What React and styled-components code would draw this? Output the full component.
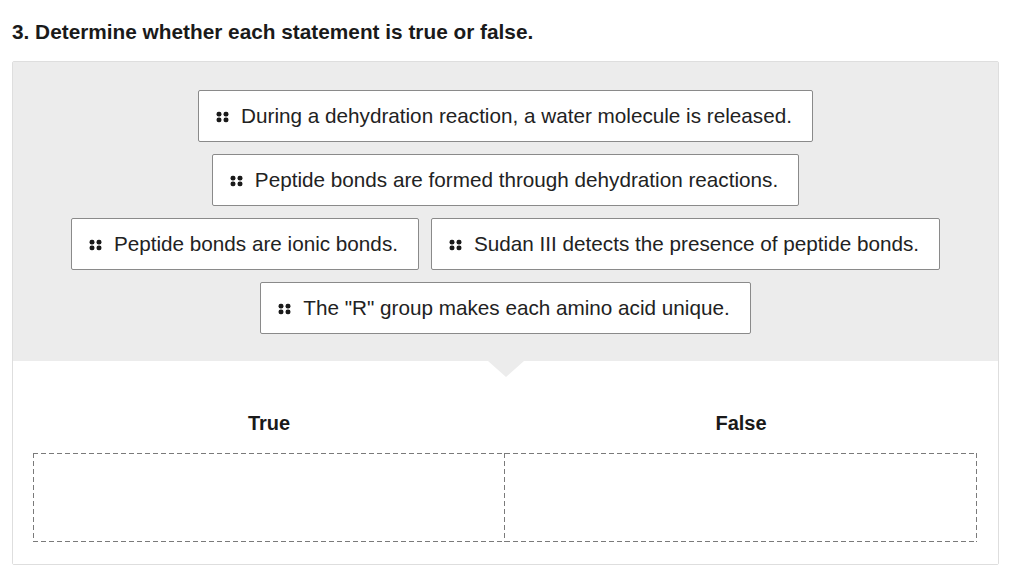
import styled, { createGlobalStyle } from "styled-components";

const GlobalStyle = createGlobalStyle`
  body {
    margin: 0;
    background: #fff;
    font-family: "Liberation Sans", Arial, sans-serif;
    color: #222;
  }
`;

const statements = [
  ["During a dehydration reaction, a water molecule is released."],
  ["Peptide bonds are formed through dehydration reactions."],
  ["Peptide bonds are ionic bonds.", "Sudan III detects the presence of peptide bonds."],
  ['The "R" group makes each amino acid unique.'],
];

function Grip() {
  return (
    <GripIcon width="13" height="12" viewBox="0 0 13 12">
      <rect x="0.5" y="0.8" width="5" height="4.6" rx="2.2" />
      <rect x="7.5" y="0.8" width="5" height="4.6" rx="2.2" />
      <rect x="0.5" y="6.6" width="5" height="4.6" rx="2.2" />
      <rect x="7.5" y="6.6" width="5" height="4.6" rx="2.2" />
    </GripIcon>
  );
}

export default function App() {
  return (
    <>
      <GlobalStyle />
      <Page>
        <Title>3. Determine whether each statement is true or false.</Title>
        <Panel>
          <Bank>
            {statements.map((row, i) => (
              <ChipRow key={i}>
                {row.map((text) => (
                  <Chip key={text}>
                    <Grip />
                    <span>{text}</span>
                  </Chip>
                ))}
              </ChipRow>
            ))}
          </Bank>
          <Targets>
            <Labels>
              <Label>True</Label>
              <Label>False</Label>
            </Labels>
            <Zones>
              <Zone />
              <Zone $right />
            </Zones>
          </Targets>
        </Panel>
      </Page>
    </>
  );
}

const Page = styled.div`
  padding: 20px 24px 0 12px;
`;

const Title = styled.h1`
  margin: 0 0 17px;
  font-size: 20.8px;
  line-height: 24px;
  font-weight: 700;
  color: #1a1a1a;
`;

const Panel = styled.div`
  width: 985px;
  border: 1px solid #dedede;
  border-radius: 2px;
`;

const Bank = styled.div`
  position: relative;
  background: #ececec;
  padding: 28px 0 27px;
  display: flex;
  flex-direction: column;
  gap: 12px;

  &::after {
    content: "";
    position: absolute;
    left: 50%;
    bottom: -16px;
    margin-left: -18px;
    border-left: 18px solid transparent;
    border-right: 18px solid transparent;
    border-top: 16px solid #ececec;
  }
`;

const ChipRow = styled.div`
  display: flex;
  justify-content: center;
  gap: 12px;
`;

const Chip = styled.div`
  display: flex;
  align-items: center;
  gap: 12px;
  height: 52px;
  box-sizing: border-box;
  padding: 0 20px 0 17px;
  background: #fff;
  border: 1px solid #8a8a8a;
  border-radius: 2px;
  font-size: 20.7px;
  color: #222;
`;

const GripIcon = styled.svg`
  fill: #1a1a1a;
  flex-shrink: 0;
  margin-top: 1px;
`;

const Targets = styled.div`
  padding: 51px 21px 22px 20px;
  background: #fff;
`;

const Labels = styled.div`
  display: grid;
  grid-template-columns: 1fr 1fr;
  margin-bottom: 19px;
`;

const Label = styled.div`
  text-align: center;
  font-size: 20px;
  line-height: 22px;
  font-weight: 700;
  color: #1a1a1a;
`;

const Zones = styled.div`
  display: grid;
  grid-template-columns: 1fr 1fr;
`;

const dashH = "repeating-linear-gradient(90deg, #7a7a7a 0 5px, transparent 5px 8px)";
const dashV = "repeating-linear-gradient(180deg, #7a7a7a 0 5px, transparent 5px 8px)";

const Zone = styled.div`
  height: 89px;
  background:
    ${dashH} top left / 100% 1px no-repeat,
    ${dashH} bottom left / 100% 1px no-repeat,
    ${dashV} top right / 1px 100% no-repeat,
    ${(p) => (p.$right ? "none" : `${dashV} top left / 1px 100% no-repeat`)};
`;
